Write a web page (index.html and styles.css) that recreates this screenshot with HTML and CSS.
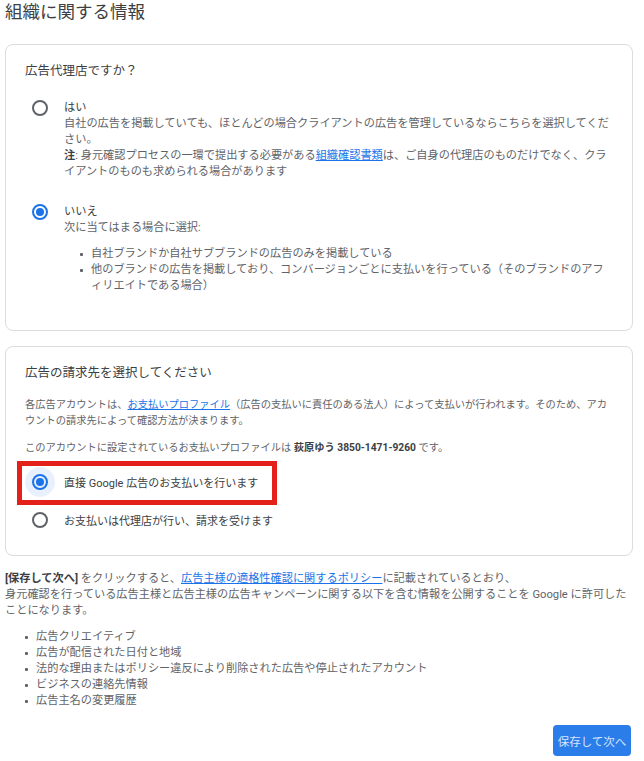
FILE: index.html
```html
<!DOCTYPE html>
<html lang="ja">
<head>
<meta charset="utf-8">
<title>組織に関する情報</title>
<link rel="stylesheet" href="styles.css">
</head>
<body>
<div class="page">
  <h1 class="title">組織に関する情報</h1>

  <section class="card card-agency">
    <h2 class="card-title">広告代理店ですか？</h2>

    <div class="option option-first">
      <span class="radio-wrap"><span class="radio"></span></span>
      <div class="option-body">
        <div class="label">はい</div>
        <p class="desc">自社の広告を掲載していても、ほとんどの場合クライアントの広告を管理しているならこちらを選択してください。</p>
        <p class="desc"><b>注</b>: 身元確認プロセスの一環で提出する必要がある<a href="#">組織確認書類</a>は、ご自身の代理店のものだけでなく、クライアントのものも求められる場合があります</p>
      </div>
    </div>

    <div class="option option-second">
      <span class="radio-wrap"><span class="radio checked"></span></span>
      <div class="option-body">
        <div class="label">いいえ</div>
        <p class="desc">次に当てはまる場合に選択:</p>
        <ul class="dots dots-inner">
          <li>自社ブランドか自社サブブランドの広告のみを掲載している</li>
          <li>他のブランドの広告を掲載しており、コンバージョンごとに支払いを行っている（そのブランドのアフィリエイトである場合）</li>
        </ul>
      </div>
    </div>
  </section>

  <section class="card card-billing">
    <h2 class="card-title">広告の請求先を選択してください</h2>
    <p class="para para-intro">各広告アカウントは、<a href="#">お支払いプロファイル</a>（広告の支払いに責任のある法人）によって支払いが行われます。そのため、アカウントの請求先によって確認方法が決まります。</p>
    <p class="para para-profile">このアカウントに設定されているお支払いプロファイルは <b>荻原ゆう 3850-1471-9260</b> です。</p>

    <div class="choice choice-first">
      <span class="radio-wrap focused"><span class="radio checked"></span></span>
      <span class="choice-label">直接 Google 広告のお支払いを行います</span>
      <span class="annotation"></span>
    </div>
    <div class="choice choice-second">
      <span class="radio-wrap"><span class="radio"></span></span>
      <span class="choice-label">お支払いは代理店が行い、請求を受けます</span>
    </div>
  </section>

  <p class="notice"><b>[保存して次へ]</b> をクリックすると、<a href="#">広告主様の適格性確認に関するポリシー</a>に記載されているとおり、<br>身元確認を行っている広告主様と広告主様の広告キャンペーンに関する以下を含む情報を公開することを Google に許可したことになります。</p>
  <ul class="dots dots-outer">
    <li>広告クリエイティブ</li>
    <li>広告が配信された日付と地域</li>
    <li>法的な理由またはポリシー違反により削除された広告や停止されたアカウント</li>
    <li>ビジネスの連絡先情報</li>
    <li>広告主名の変更履歴</li>
  </ul>

  <div class="actions">
    <button class="btn-primary" type="button">保存して次へ</button>
  </div>
</div>
</body>
</html>
```

FILE: styles.css
```css
* {
  box-sizing: border-box;
}

body {
  margin: 0;
  background: #ffffff;
  color: #5f6368;
  font-family: Roboto, "Noto Sans CJK JP", sans-serif;
}

.page {
  width: 628px;
  margin-left: 5px;
}

.title {
  margin: 0;
  font-size: 17.5px;
  line-height: 24px;
  font-weight: 400;
  color: #3c4043;
}

.card {
  margin-top: 20px;
  border: 1px solid #dadce0;
  border-radius: 8px;
  padding: 16px 19px 36px;
}

.card-billing {
  margin-top: 15px;
  padding-bottom: 20px;
}

.card-title {
  margin: 0;
  font-size: 12.5px;
  line-height: 20px;
  font-weight: 400;
  color: #3c4043;
}

a {
  color: #1a73e8;
  text-decoration: underline;
}

b {
  font-weight: 700;
  color: #3c4043;
}

/* radio */
.radio-wrap {
  flex: none;
  width: 30px;
  height: 30px;
  border-radius: 50%;
  display: flex;
  align-items: center;
  justify-content: center;
}

.radio-wrap.focused {
  background: #e8f0fe;
}

.radio {
  width: 16px;
  height: 16px;
  border: 2px solid #5f6368;
  border-radius: 50%;
  display: flex;
  align-items: center;
  justify-content: center;
}

.radio.checked {
  border-color: #1a73e8;
}

.radio.checked::after {
  content: "";
  width: 8px;
  height: 8px;
  border-radius: 50%;
  background: #1a73e8;
}

/* agency options */
.option {
  display: flex;
  align-items: flex-start;
  font-size: 11.2px;
  line-height: 16px;
}

.option .radio-wrap {
  margin-top: -7px;
  margin-right: 9px;
}

.option-first {
  margin-top: 19px;
}

.option-second {
  margin-top: 24px;
}

.option-body {
  flex: 1;
  min-width: 0;
}

.label {
  color: #3c4043;
}

.desc {
  margin: 0;
}

/* bullet lists */
.dots {
  list-style: none;
  margin: 0;
}

.dots li {
  position: relative;
}

.dots li::before {
  content: "";
  position: absolute;
  left: -11px;
  top: 7px;
  width: 3px;
  height: 3px;
  border-radius: 1px;
  background: #5f6368;
}

.dots-inner {
  margin-top: 10px;
  padding-left: 27px;
}

.dots-outer {
  margin-top: 10px;
  padding-left: 31px;
  font-size: 11.2px;
  line-height: 16px;
}

/* billing card */
.para {
  margin: 0;
  font-size: 10.25px;
  line-height: 16px;
}

.para-intro {
  margin-top: 14px;
}

.para-profile {
  margin-top: 11px;
}

.choice {
  display: flex;
  align-items: center;
  height: 30px;
  font-size: 11px;
  color: #3c4043;
}

.choice .radio-wrap {
  margin-right: 9px;
}

.choice-first {
  position: relative;
  margin-top: 11px;
}

.choice-second {
  margin-top: 8px;
}

.annotation {
  position: absolute;
  left: -8px;
  top: -6px;
  width: 260px;
  height: 44px;
  border: 5px solid #e3211a;
  pointer-events: none;
}

/* footer */
.notice {
  margin: 15px 0 0;
  font-size: 11.2px;
  line-height: 16px;
}

.actions {
  display: flex;
  justify-content: flex-end;
  margin-top: 16px;
  padding-right: 2px;
}

.btn-primary {
  width: 78px;
  height: 31px;
  border: none;
  border-radius: 4px;
  background: #2b7de9;
  color: #d6e4fb;
  font-family: Roboto, "Noto Sans CJK JP", sans-serif;
  font-size: 11.5px;
  padding: 0;
}
```
